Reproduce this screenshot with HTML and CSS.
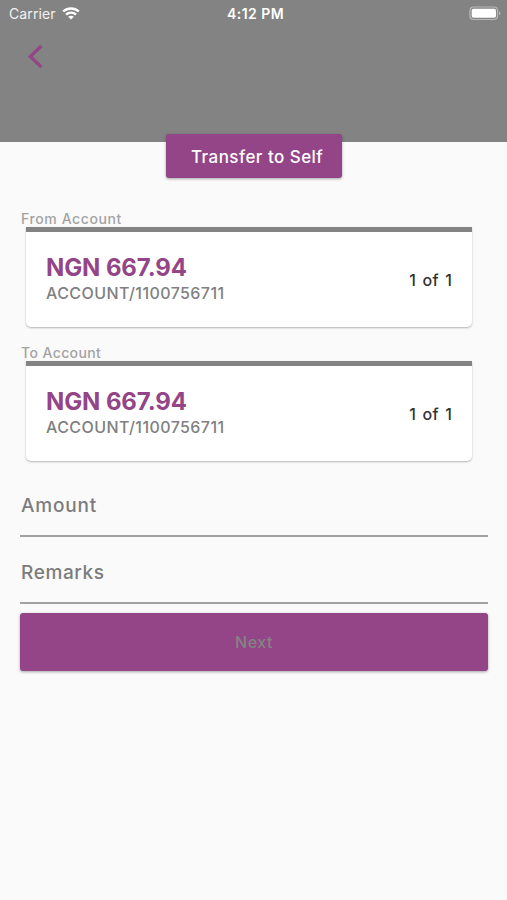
FILE: index.html
```html
<!DOCTYPE html>
<html lang="en">
<head>
<meta charset="utf-8">
<title>Transfer to Self</title>
<link rel="stylesheet" href="styles.css">
</head>
<body>
<header class="header">
  <div class="status">
    <div class="carrier"><span>Carrier</span>
      <svg class="wifi" width="18" height="13" viewBox="0 0 18 13" fill="none" stroke="#fff" stroke-width="2.4"><path d="M1.200 4.500C5.500.400 12.500.400 16.800 4.500M4 7.700c2.900-2.600 7.100-2.600 10 0"/><path d="M9 12.500 6.200 9.800c1.500-1.400 4.100-1.400 5.600 0z" fill="#fff" stroke="none"/></svg>
    </div>
    <time class="time">4:12 PM</time>
    <svg class="battery" width="32" height="15" viewBox="0 0 32 15"><rect x="1" y="1" width="27.500" height="12.500" rx="3.500" fill="none" stroke="#b9b9b9" stroke-width="1.200"/><rect x="2.700" y="2.800" width="24.300" height="9" rx="1.800" fill="#fff"/><path d="M30 5.300c2 .7 2 3.300 0 4z" fill="#b9b9b9"/></svg>
  </div>
  <button class="back" aria-label="Back"><svg width="16" height="25" viewBox="0 0 16 25" fill="none" stroke="#934587" stroke-width="3.2"><path d="M14.300 2 3.300 12.500l11 10.500"/></svg></button>
</header>
<main class="content">
  <h1 class="title"><span>Transfer to Self</span></h1>
  <section class="account">
    <h2 class="label from">From Account</h2>
    <div class="card">
      <div class="details"><div class="balance">NGN 667.94</div><div class="number">ACCOUNT/1100756711</div></div>
      <span class="count">1 of 1</span>
    </div>
  </section>
  <section class="account">
    <h2 class="label to">To Account</h2>
    <div class="card">
      <div class="details"><div class="balance">NGN 667.94</div><div class="number">ACCOUNT/1100756711</div></div>
      <span class="count">1 of 1</span>
    </div>
  </section>
  <div class="field amount">Amount</div>
  <div class="field remarks">Remarks</div>
  <button class="next"><span>Next</span></button>
</main>
</body>
</html>
```
FILE: styles.css
```css
* { box-sizing: border-box; }
body { margin: 0; min-height: 900px; background: #fafafa; font-family: Inter, "Liberation Sans", sans-serif; }
button { border: 0; padding: 0; font-family: inherit; }
.header { height: 142px; background: #838383; }
.status { display: grid; grid-template-columns: 1fr auto 1fr; align-items: center; height: 27px; padding: 0 6px 0 9px; color: #fff; }
.carrier { display: flex; align-items: center; gap: 6px; font-size: 14px; letter-spacing: 0.1px; color: #f2f2f2; }
.wifi { margin-top: -1px; }
.time { padding-left: 1px; font-size: 14px; font-weight: 600; letter-spacing: 0.45px; }
.battery { justify-self: end; }
.back { display: block; margin: 17px 0 0 27px; background: none; width: 16px; height: 25px; }
.back svg { display: block; }
.content { display: flex; flex-direction: column; padding: 0 19px 0 20px; }
.title { align-self: center; width: 176px; height: 44px; margin: -8px 0 32px; padding-left: 25px; background: #934587; border-radius: 3px; box-shadow: 0 1px 3px rgba(0,0,0,.35); color: #fff; font-size: 17px; font-weight: 500; line-height: 46px; letter-spacing: 0.46px; white-space: nowrap; }
.account { height: 134px; }
.label { height: 17px; margin: 0 0 0 1px; font-size: 14px; font-weight: 500; line-height: 17px; color: #a3a3a3; }
.from { letter-spacing: 0.6px; }
.to { letter-spacing: 0.4px; }
.card { display: flex; align-items: center; justify-content: space-between; height: 100px; margin: 0 16px 0 6px; padding: 1px 19px 0 20px; background: #fff; border-top: 5px solid #838383; border-radius: 0 0 5px 5px; box-shadow: 0 1px 2px rgba(0,0,0,.28); white-space: nowrap; }
.details { padding-bottom: 2px; }
.balance { font-size: 24px; font-weight: 700; line-height: 28px; letter-spacing: -0.1px; color: #934587; }
.number { font-size: 16px; font-weight: 450; line-height: 23px; letter-spacing: 0.42px; color: #808080; }
.count { margin: -1px 0.5px 0 0; font-size: 16px; font-weight: 500; letter-spacing: 0.5px; word-spacing: 1.4px; color: #333; }
.field { height: 67px; padding-left: 1px; border-bottom: 2px solid #a2a2a2; color: #7c7c7c; font-size: 19px; font-weight: 450; line-height: 72px; letter-spacing: 0.6px; }
.amount { margin-top: -8px; line-height: 72px; letter-spacing: 0.82px; }
.next { height: 58px; margin-top: 9px; border-radius: 3px; background: #934587; box-shadow: 0 1px 3px rgba(0,0,0,.35); color: #838383; font-size: 16px; font-weight: 500; letter-spacing: 0.5px; }
```
